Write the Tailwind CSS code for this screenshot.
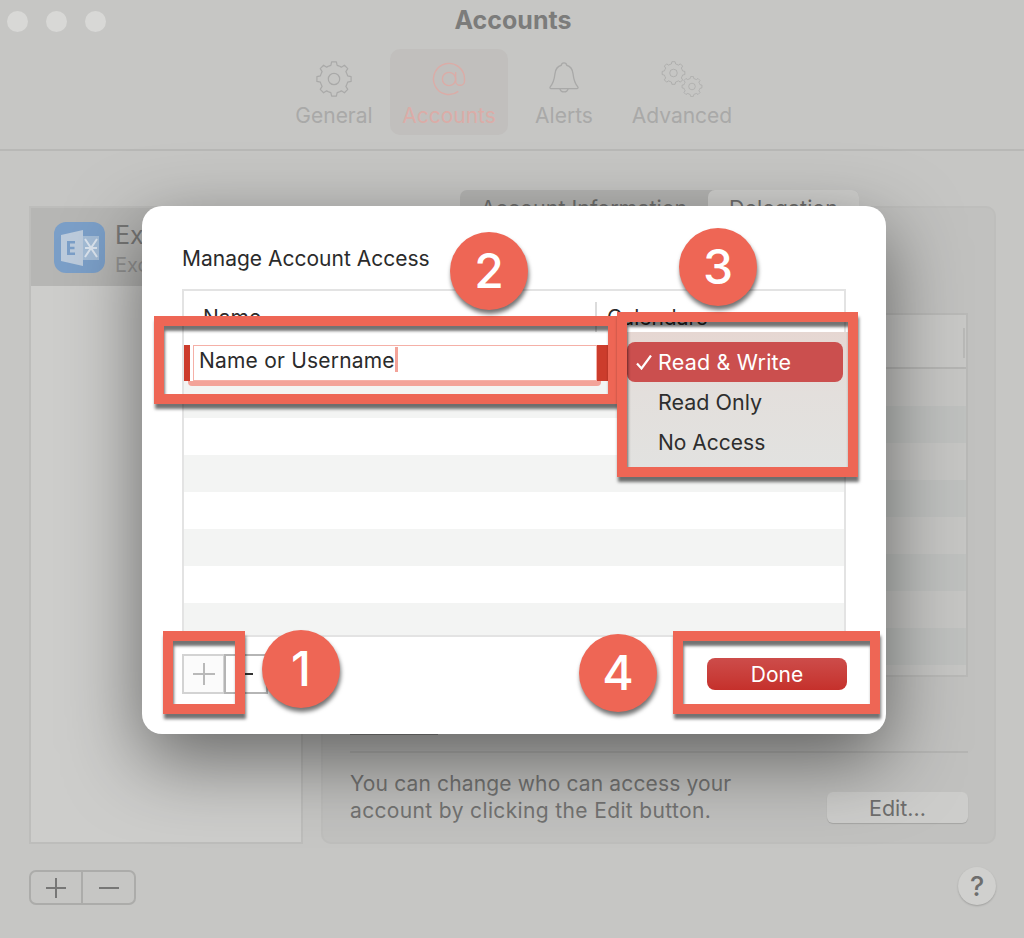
<!DOCTYPE html>
<html lang="en">
<head>
<meta charset="utf-8">
<title>Accounts</title>
<script src="https://cdn.jsdelivr.net/npm/@tailwindcss/browser@4"></script>
</head>
<body class="m-0">
<div class="relative w-[1024px] h-[938px] overflow-hidden bg-[#c6c6c4] font-['Inter','Liberation_Sans',sans-serif]">

  <svg class="absolute w-0 h-0" aria-hidden="true"><defs>
    <path id="t" d="M-3.37-8.13-2-8.6-1.5-10.8 1.5-10.8 2-8.6 3.37-8.13" fill="none" stroke="currentColor" stroke-linejoin="round"/>
    <g id="gear">
      <use href="#t"/><use href="#t" transform="rotate(45)"/><use href="#t" transform="rotate(90)"/><use href="#t" transform="rotate(135)"/><use href="#t" transform="rotate(180)"/><use href="#t" transform="rotate(225)"/><use href="#t" transform="rotate(270)"/><use href="#t" transform="rotate(315)"/>
      <circle r="3.6" fill="none" stroke="currentColor"/>
    </g>
  </defs></svg>

  <!-- Window title bar -->
  <header class="relative h-[42px] flex items-center justify-center">
    <div class="absolute left-[7px] top-[11px] flex gap-[18px]">
      <span class="w-[21px] h-[21px] rounded-full bg-[#d8d8d6]"></span>
      <span class="w-[21px] h-[21px] rounded-full bg-[#d8d8d6]"></span>
      <span class="w-[21px] h-[21px] rounded-full bg-[#d8d8d6]"></span>
    </div>
    <h1 class="text-[25px] font-bold text-[#7c7c7b] ml-[2px]">Accounts</h1>
  </header>

  <!-- Toolbar -->
  <nav class="h-[109px] border-b-2 border-[#b8b8b6] flex pl-[278px] pt-[7px] text-[21px] leading-[24px] text-[#a9a9a8]">
    <div class="w-[112px] h-[86px] flex flex-col items-center pt-[11px] gap-[6px]">
      <svg class="w-[38px] h-[38px] text-[#a9a9a8]" viewBox="-12 -12 24 24" stroke-width="0.75"><use href="#gear"/></svg>
      <span>General</span>
    </div>
    <div class="w-[118px] h-[86px] flex flex-col items-center pt-[11px] gap-[6px] rounded-[10px] bg-[#c1bfbd] text-[#dbaca7]">
      <svg class="w-[38px] h-[38px]" viewBox="0 0 24 24" fill="none" stroke="currentColor" stroke-width="0.9"><circle cx="12" cy="12" r="4.2"/><path d="M16.2 7.6v5.6a2.8 2.8 0 0 0 5.6 0V12a9.8 9.8 0 1 0-3.9 7.8"/></svg>
      <span>Accounts</span>
    </div>
    <div class="w-[112px] h-[86px] flex flex-col items-center pt-[11px] gap-[6px]">
      <svg class="w-[38px] h-[38px]" viewBox="0 0 24 24" fill="none" stroke="currentColor" stroke-width="0.85" stroke-linejoin="round"><path d="M12 1.8c-1 0-1.6.6-1.7 1.5C7.6 4 6.6 6 6.3 8.7c-.4 3.600-1 5.900-3 8.300-.4.500-.1 1.100.5 1.100h16.400c.6 0 .9-.6.500-1.100-2-2.400-2.600-4.700-3-8.300C17.400 6 16.400 4 13.700 3.300 13.600 2.400 13 1.800 12 1.800z"/><path d="M9.400 18.200a2.700 2.700 0 0 0 5.200 0"/></svg>
      <span>Alerts</span>
    </div>
    <div class="w-[124px] h-[86px] flex flex-col items-center pt-[11px] gap-[6px]">
      <svg class="w-[44px] h-[38px]" viewBox="0 0 44 38" stroke-width="0.75"><g transform="translate(13.500 13) scale(1.050)"><use href="#gear"/></g><g transform="translate(32 26.500) scale(0.920)"><use href="#gear"/></g></svg>
      <span>Advanced</span>
    </div>
  </nav>

  <!-- Main content -->
  <main class="flex mt-[55px] ml-[29px] w-[967px] h-[638px] gap-[18px]">
    <section class="w-[274px] flex flex-col border-2 border-[#bdbdbb] bg-[#cdcdcb]">
      <div class="h-[78px] bg-[#b6b6b4] flex items-start gap-[10px] pl-[23px] pt-[14px]">
        <div class="w-[51px] h-[51px] rounded-[12px] bg-[#7b9fc8] flex items-center justify-center shrink-0">
          <svg class="w-[40px] h-[36px]" viewBox="0 0 40 36">
            <path d="M1 5 23 0v36L1 31z" fill="#bccbdc"/>
            <path d="M23 6h16v24H23z" fill="#a4bcd6"/>
            <path d="M25 9l12 18M37 9 25 27M25 18h5M32 18h5" stroke="#dbe4ee" stroke-width="2" fill="none"/>
            <path d="M7 11h8v2.400h-5v3.400h4.500v2.400H10v3.400h5V25H7z" fill="#7b9fc8"/>
          </svg>
        </div>
        <div class="w-[27px] overflow-hidden flex flex-col leading-[26px] whitespace-nowrap">
          <span class="text-[25px] text-[#777776]">Exchange</span>
          <span class="text-[20px] text-[#939392] mt-[4px]">Exchange</span>
        </div>
      </div>
    </section>

    <section class="relative flex-1 rounded-[10px] border-2 border-[#bebebc] bg-[#c1c1bf] pl-[27px] pr-[26px] pt-[105px] flex flex-col">
      <div class="absolute left-[137px] -top-[18px] w-[399px] h-[34px] rounded-[7px] bg-[#b5b5b3] flex text-[21.5px] text-[#6e6e6d]">
        <span class="w-[248px] pt-[2px] text-center">Account Information</span>
        <span class="flex-1 pt-[2px] text-center rounded-[7px] bg-[#cfcfcd]">Delegation</span>
      </div>
      <div class="h-[364px] border-2 border-[#b9b9b7] flex flex-col relative">
        <div class="h-[54px] shrink-0 border-b-2 border-[#b5b5b3] bg-[#c8c8c6]"></div>
        <div class="h-[37px] bg-[#c6c6c4]"></div><div class="h-[37px] bg-[#bfc1bf]"></div>
        <div class="h-[37px] bg-[#c6c6c4]"></div><div class="h-[37px] bg-[#bfc1bf]"></div>
        <div class="h-[37px] bg-[#c6c6c4]"></div><div class="h-[37px] bg-[#bfc1bf]"></div>
        <div class="h-[37px] bg-[#c6c6c4]"></div><div class="h-[37px] bg-[#bfc1bf]"></div>
        <div class="flex-1 bg-[#c6c6c4]"></div>
        <span class="absolute right-[1px] top-[13px] w-[2px] h-[30px] bg-[#b9b9b7]"></span>
      </div>
      <div class="w-[88px] h-[12px] mt-[46px] bg-[#888887]"></div>
      <div class="h-[2px] mt-[16px] bg-[#b5b5b3]"></div>
      <div class="flex items-start justify-between mt-[17px]">
        <p class="text-[21px] leading-[27px] text-[#737372]"><span class="block tracking-[0.15px]">You can change who can access your</span><span class="block tracking-[0.36px]">account by clicking the Edit button.</span></p>
        <button class="w-[141px] h-[31px] mt-[22px] rounded-[6px] bg-[#cdcdcb] text-[21.5px] leading-[28px] text-[#6e6e6d] shadow-[0_1px_1px_rgba(0,0,0,0.15)]">Edit...</button>
      </div>
    </section>
  </main>

  <!-- Bottom bar -->
  <footer class="flex items-start justify-between ml-[29px] w-[967px] mt-[23px]">
    <div class="mt-[3px] w-[107px] h-[35px] flex rounded-[7px] border-2 border-[#acacaa]">
      <span class="w-[52px] border-r-2 border-[#acacaa] flex items-center justify-center">
        <svg class="w-[20px] h-[20px]" viewBox="0 0 20 20" stroke="#777776" stroke-width="2"><path d="M10 0v20M0 10h20"/></svg>
      </span>
      <span class="flex-1 flex items-center justify-center">
        <svg class="w-[20px] h-[20px]" viewBox="0 0 20 20" stroke="#777776" stroke-width="2"><path d="M0 10h20"/></svg>
      </span>
    </div>
    <button class="w-[38px] h-[38px] rounded-full bg-[#d0d0ce] shadow-[0_1px_2px_rgba(0,0,0,0.2)] text-[27px] font-medium leading-[40px] text-[#6e6e6d]">?</button>
  </footer>

  <!-- Dialog -->
  <div class="absolute left-[142px] top-[206px] w-[744px] h-[528px] rounded-[20px] bg-white shadow-[0_25px_75px_rgba(0,0,0,0.5)] pt-[40px] px-[40px] flex flex-col">
    <h2 class="text-[21px] leading-[26px] text-[#2b2b2b]">Manage Account Access</h2>
    <div class="mt-[17px] w-[664px] h-[348px] shrink-0 border-2 border-[#e3e3e3] flex flex-col overflow-hidden">
      <div class="h-[54px] shrink-0 relative flex text-[21px] text-[#2b2b2b]">
        <span class="w-[413px] h-[30px] mt-[11px] pl-[19px] border-r-2 border-[#dcdcdc] leading-[32px]">Name</span>
        <span class="pl-[10px] mt-[11px] leading-[32px]">Calendars</span>
      </div>
      <div class="h-[36px] shrink-0 relative bg-white">
        <span class="absolute left-0 top-0 w-[6px] h-[36px] bg-[#cc3c2c]"></span>
        <span class="absolute left-[413px] top-0 w-[14px] h-[36px] bg-[#cc3c2c]"></span>
        <span class="absolute left-[4px] top-[36px] w-[413px] h-[5px] rounded-b-[4px] bg-[#f3a399]"></span>
        <div class="absolute left-[9px] top-0 w-[404px] h-[36px] border border-[#f5b0a7] bg-white pl-[5px] text-[21px] tracking-[0.2px] leading-[30px] text-[#2b2b2b] flex items-start">
          <span>Name or Username</span><span class="w-[3px] h-[25px] mt-[1px] bg-[#f3a399]"></span>
        </div>
      </div>
      <div class="h-[37px] shrink-0 bg-[#f3f4f3]"></div>
      <div class="h-[37px] shrink-0 bg-white"></div>
      <div class="h-[37px] shrink-0 bg-[#f3f4f3]"></div>
      <div class="h-[37px] shrink-0 bg-white"></div>
      <div class="h-[37px] shrink-0 bg-[#f3f4f3]"></div>
      <div class="h-[37px] shrink-0 bg-white"></div>
      <div class="flex-1 bg-[#f3f4f3]"></div>
    </div>
    <div class="flex items-start justify-between">
      <div class="mt-[17px] flex h-[40px]">
        <span class="w-[43px] border-2 border-[#d3d3d3] bg-[#fbfbfb] flex items-center justify-center">
          <svg class="w-[22px] h-[22px]" viewBox="0 0 22 22" stroke="#b9b9b9" stroke-width="2"><path d="M11 0v22M0 11h22"/></svg>
        </span>
        <span class="w-[44px] -ml-[1px] border-2 border-[#b5b5b5] flex items-center justify-center">
          <svg class="w-[14px] h-[2px]" viewBox="0 0 14 2"><path d="M0 1h14" stroke="#333" stroke-width="2"/></svg>
        </span>
      </div>
      <button class="w-[140px] h-[32px] mt-[21px] -mr-[1px] rounded-[8px] bg-linear-to-b from-[#cd4c4a] to-[#c5302b] text-[21px] leading-[31px] text-white">Done</button>
    </div>
  </div>

  <!-- Calendar access pop-up menu -->
  <div class="absolute left-[627px] top-[332px] w-[221px] h-[135px] bg-linear-to-b from-[#e6d7d2] via-[#e3dfdc] via-45% to-[#e2e2e0] text-[21.5px] tracking-[0.2px] leading-[41px] text-[#2e2e2e]">
    <div class="mt-[10px] w-[216px] h-[40px] rounded-[8px] bg-[#cb4f4e] text-white flex">
      <svg class="ml-[9px] mt-[13px] w-[16px] h-[15px]" viewBox="0 0 16 15" fill="none" stroke="#fff" stroke-width="2.200"><path d="M1 8.500 5.500 13.500 15 0.500"/></svg>
      <span class="ml-[6px]">Read &amp; Write</span>
    </div>
    <div class="pl-[31px] tracking-normal">Read Only</div>
    <div class="pl-[31px] -mt-[1px] text-[21px] tracking-normal">No Access</div>
  </div>

  <!-- Annotation frames -->
  <div class="absolute left-[163px] top-[631px] w-[82px] h-[83px] border-[10px] border-[#ee6655] shadow-[1px_5px_3px_rgba(0,0,0,0.55),inset_1px_5px_3px_rgba(0,0,0,0.55)]"></div>
  <div class="absolute left-[154px] top-[316px] w-[464px] h-[88px] border-[10px] border-[#ee6655] shadow-[1px_5px_3px_rgba(0,0,0,0.55),inset_1px_5px_3px_rgba(0,0,0,0.55)]"></div>
  <div class="absolute left-[617px] top-[312px] w-[241px] h-[165px] border-[10px] border-[#ee6655] shadow-[1px_5px_3px_rgba(0,0,0,0.55),inset_1px_5px_3px_rgba(0,0,0,0.55)]"></div>
  <div class="absolute left-[673px] top-[631px] w-[207px] h-[83px] border-[10px] border-[#ee6655] shadow-[1px_5px_3px_rgba(0,0,0,0.55),inset_1px_5px_3px_rgba(0,0,0,0.55)]"></div>

  <!-- Numbered markers -->
  <div class="absolute left-[262px] top-[630px] w-[78px] h-[78px] rounded-full bg-[#ee6655] text-white text-[48px] font-medium leading-[78px] text-center shadow-[1px_4px_4px_rgba(0,0,0,0.55)]">1</div>
  <div class="absolute left-[450px] top-[232px] w-[78px] h-[78px] rounded-full bg-[#ee6655] text-white text-[48px] font-medium leading-[78px] text-center shadow-[1px_4px_4px_rgba(0,0,0,0.55)]">2</div>
  <div class="absolute left-[679px] top-[228px] w-[78px] h-[78px] rounded-full bg-[#ee6655] text-white text-[48px] font-medium leading-[78px] text-center shadow-[1px_4px_4px_rgba(0,0,0,0.55)]">3</div>
  <div class="absolute left-[579px] top-[634px] w-[78px] h-[78px] rounded-full bg-[#ee6655] text-white text-[48px] font-medium leading-[78px] text-center shadow-[1px_4px_4px_rgba(0,0,0,0.55)]">4</div>
</div>
</body>
</html>
